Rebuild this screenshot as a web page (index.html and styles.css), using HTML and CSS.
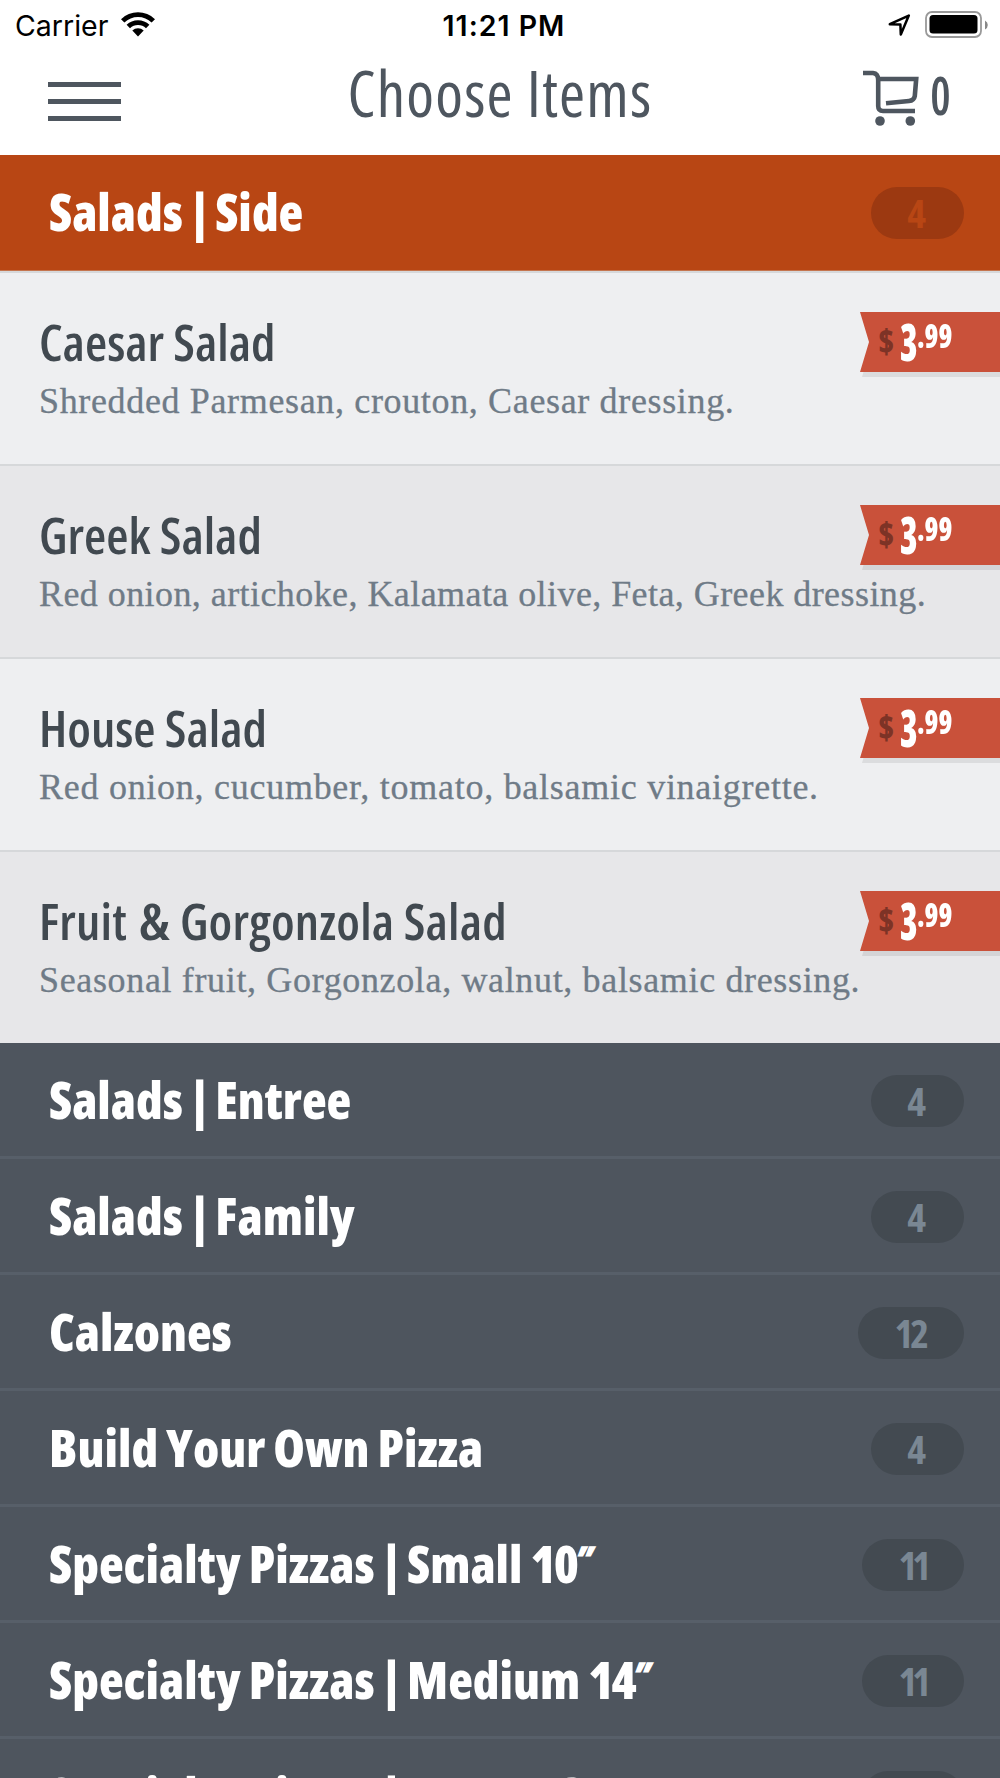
FILE: index.html
```html
<!DOCTYPE html>
<html lang="en">
<head>
    <meta charset="UTF-8">
    <meta name="viewport" content="width=device-width, initial-scale=1.0">
    <title>Choose Items</title>
    <link rel="stylesheet" href="styles.css">
</head>
<body>
    <div class="status-bar">
        <div class="carrier">
            <span>Carrier</span>
            <svg class="wifi" width="34" height="25" viewBox="0 0 34 25">
                <path d="M0 7.2 A24.5 24.5 0 0 1 34 7.2 L30.6 10.6 A19.5 19.5 0 0 0 3.4 10.6 Z"/>
                <path d="M5.6 12.8 A16.4 16.4 0 0 1 28.4 12.8 L25 16.2 A11.6 11.6 0 0 0 9 16.2 Z"/>
                <path d="M11.3 18.5 A8.4 8.4 0 0 1 22.7 18.5 L17 24.4 Z"/>
            </svg>
        </div>
        <div class="time">11:21 PM</div>
        <div class="battery-area">
            <svg width="23" height="23" viewBox="0 0 23 23">
                <path d="M1.8 10.2 L20.8 1.6 L12.8 20.5 L12.4 10.6 Z" fill="none" stroke="#000" stroke-width="2.5" stroke-linejoin="round"/>
            </svg>
            <svg width="63" height="28" viewBox="0 0 63 28">
                <rect x="1" y="1" width="55" height="25" rx="6" fill="none" stroke="#999" stroke-width="1.8"/>
                <rect x="4.5" y="4" width="48" height="18.5" rx="3.5"/>
                <path d="M60 9.5 Q62.8 11 62.8 14 T60 18.5 Z" fill="#888"/>
            </svg>
        </div>
    </div>
    <header>
        <button class="menu-btn" aria-label="Menu"><i></i><i></i><i></i></button>
        <h1>Choose Items</h1>
        <div class="cart">
            <svg width="56" height="56" viewBox="0 0 56 56" fill="none" stroke="#4e565f" stroke-width="4.6">
                <path d="M0 3 H10 Q15.2 3.5 15.2 10 V36 Q15.2 41 20 41 H52"/>
                <path d="M15 9 H53.2 L51.8 26 Q51 30.4 46 31 L23 33.3"/>
                <circle cx="17" cy="51" r="4.8" fill="#4e565f" stroke="none"/>
                <circle cx="47.3" cy="51" r="4.8" fill="#4e565f" stroke="none"/>
            </svg>
            <span>0</span>
        </div>
    </header>
    <main>
        <div class="category active">
            <h2>Salads <span class="bar">|</span> Side</h2>
            <span class="count">4</span>
        </div>
        <div class="item">
            <h3>Caesar Salad</h3>
            <p>Shredded Parmesan, crouton, Caesar dressing.</p>
            <div class="price"><div class="tag"><i>$</i><b>3</b><sup>.99</sup></div></div>
        </div>
        <div class="item">
            <h3>Greek Salad</h3>
            <p>Red onion, artichoke, Kalamata olive, Feta, Greek dressing.</p>
            <div class="price"><div class="tag"><i>$</i><b>3</b><sup>.99</sup></div></div>
        </div>
        <div class="item">
            <h3>House Salad</h3>
            <p>Red onion, cucumber, tomato, balsamic vinaigrette.</p>
            <div class="price"><div class="tag"><i>$</i><b>3</b><sup>.99</sup></div></div>
        </div>
        <div class="item">
            <h3>Fruit <span class="amp">&amp;</span> Gorgonzola Salad</h3>
            <p>Seasonal fruit, Gorgonzola, walnut, balsamic dressing.</p>
            <div class="price"><div class="tag"><i>$</i><b>3</b><sup>.99</sup></div></div>
        </div>
        <div class="category">
            <h2>Salads <span class="bar">|</span> Entree</h2>
            <span class="count">4</span>
        </div>
        <div class="category">
            <h2>Salads <span class="bar">|</span> Family</h2>
            <span class="count">4</span>
        </div>
        <div class="category">
            <h2>Calzones</h2>
            <span class="count two">12</span>
        </div>
        <div class="category">
            <h2>Build Your Own Pizza</h2>
            <span class="count">4</span>
        </div>
        <div class="category">
            <h2>Specialty Pizzas <span class="bar">|</span> Small <span class="size">10<span class="inch">″</span></span></h2>
            <span class="count ones">11</span>
        </div>
        <div class="category">
            <h2>Specialty Pizzas <span class="bar">|</span> Medium <span class="size">14<span class="inch">″</span></span></h2>
            <span class="count ones">11</span>
        </div>
        <div class="category">
            <h2>Specialty Pizzas <span class="bar">|</span> Large <span class="size">16<span class="inch">″</span></span></h2>
            <span class="count ones">11</span>
        </div>
    </main>
</body>
</html>
```
FILE: styles.css
```css
*{
    box-sizing: border-box;
}
body{
    margin: 0;
    height: 1778px;
    overflow: hidden;
    background-color: white;
    font-family: "Open Sans", sans-serif;
    font-stretch: 75%;
}
h1, h2, h3, p{
    margin: 0;
    white-space: nowrap;
}
.status-bar{
    display: grid;
    grid-template-columns: 1fr auto 1fr;
    height: 50px;
    padding: 0 12px 0 15px;
    align-items: center;
    font-family: Inter, sans-serif;
    font-size: 28.5px;
    color: black;
}
.carrier{
    display: flex;
    gap: 13px;
    align-items: center;
}
.wifi{
    margin-top: -2px;
}
.time{
    font-weight: 600;
    letter-spacing: 1px;
    padding-left: 5px;
}
.battery-area{
    display: flex;
    justify-content: flex-end;
    gap: 14px;
    align-items: center;
}
header{
    display: grid;
    grid-template-columns: 1fr auto 1fr;
    height: 105px;
    color: #4e565f;
}
.menu-btn{
    display: flex;
    flex-direction: column;
    gap: 12px;
    width: 73px;
    margin: 32px 0 0 48px;
    padding: 0;
    border: none;
    background: none;
    height: 39px;
}
.menu-btn i{
    display: block;
    width: 73px;
    height: 5px;
    background-color: #4e565f;
}
h1{
    font-size: 63px;
    font-weight: 400;
    letter-spacing: 1.2px;
    line-height: 86px;
}
.cart{
    display: flex;
    justify-content: flex-end;
    gap: 8px;
    padding: 20px 49px 0 0;
    font-size: 53px;
    font-weight: 600;
    line-height: 50px;
}
.cart span{
    transform: scaleX(0.86);
    transform-origin: right;
}
.category{
    display: flex;
    justify-content: space-between;
    height: 116px;
    padding: 32px 36px 0 49px;
    background-color: #4e555e;
    border-bottom: 3px solid #575f69;
    color: white;
}
.category.active{
    background-color: #b84614;
    border-bottom: 1px solid #c4754f;
}
h2{
    font-size: 51px;
    font-weight: 800;
    word-spacing: -1px;
    line-height: 48px;
}
.bar{
    margin: 0 -3px 0 -2px;
}
.size{
    letter-spacing: -2px;
}
.inch{
    font-size: 34px;
    vertical-align: 12px;
    line-height: 0;
    -webkit-text-stroke: 1.5px white;
}
.count{
    height: 52px;
    padding: 0 38px 0 36px;
    border-radius: 26px;
    background-color: #434a51;
    color: #7a8793;
    font-size: 40px;
    font-weight: 700;
    line-height: 51px;
}
.count.two{
    letter-spacing: -3px;
}
.count.ones{
    letter-spacing: -5px;
}
.active .count{
    background-color: #9c3911;
    color: #b84614;
}
.item{
    position: relative;
    height: 193px;
    padding: 38px 39px 0;
    background-color: #eeeff1;
    border-top: 2px solid #d6d8da;
}
.item:nth-child(odd){
    background-color: #e7e7e9;
}
h3{
    font-size: 51px;
    font-weight: 600;
    line-height: 60px;
    color: #414950;
}
.amp{
    display: inline-block;
    margin: 0 3px 0 4px;
    transform: scaleX(1.15);
}
.item:nth-child(5) h3{
    letter-spacing: 0.2px;
}
p{
    margin-top: 3px;
    font-family: "Liberation Serif", serif;
    font-stretch: normal;
    font-size: 36px;
    letter-spacing: 0.65px;
    line-height: 54px;
    color: #6f7b87;
    -webkit-text-stroke: 0.3px #6f7b87;
}
.item:nth-child(3) p{
    letter-spacing: 0.43px;
}
.item:nth-child(4) p{
    letter-spacing: 0.73px;
}
/* ribbon hangs off the right edge */
.price{
    position: absolute;
    top: 39px;
    right: 0;
    filter: drop-shadow(2px 5px 0 rgba(0,0,0,0.08));
}
.tag{
    display: flex;
    width: 140px;
    height: 60px;
    padding-left: 18px;
    background-color: #c9513a;
    clip-path: polygon(0 0, 100% 0, 100% 100%, 0 100%, 9px 50%);
    color: white;
    font-weight: 700;
}
.tag i{
    width: 22px;
    font-size: 33px;
    font-weight: 800;
    font-style: normal;
    line-height: 60px;
    color: #7d3326;
}
.tag b{
    width: 17px;
    font-size: 51px;
    font-weight: 800;
    line-height: 59px;
    transform: scaleX(0.7);
    transform-origin: left;
}
.tag sup{
    font-size: 34px;
    font-weight: 800;
    line-height: 46px;
    transform: scaleX(0.82);
    transform-origin: left;
}
```
